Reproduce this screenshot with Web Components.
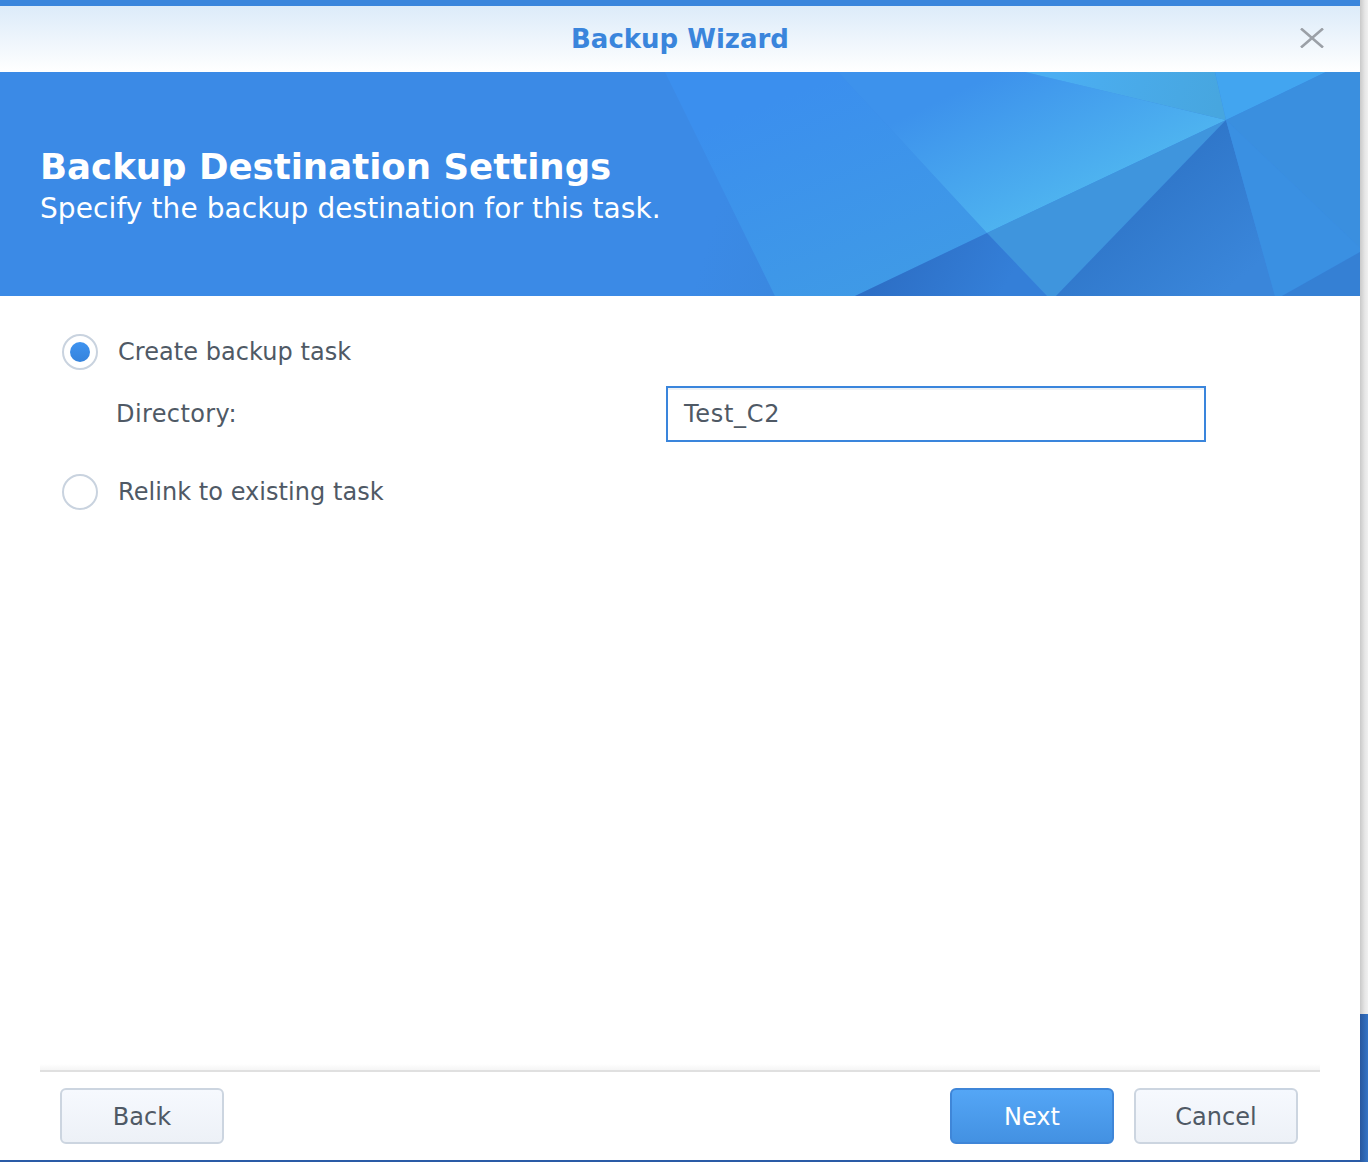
<!DOCTYPE html>
<html>
<head>
<meta charset="utf-8">
<title>Backup Wizard</title>
<style>
    html, body { margin: 0; padding: 0; background: #fff; }
    body { width: 1368px; height: 1162px; overflow: hidden; font-family: "DejaVu Sans", sans-serif; }
</style>
</head>
<body>
<desktop-frame>
    <wizard-window title-text="Backup Wizard">
        <wizard-banner heading="Backup Destination Settings" sub="Specify the backup destination for this task."></wizard-banner>
        <wizard-form></wizard-form>
        <wizard-footer></wizard-footer>
    </wizard-window>
</desktop-frame>

<script>
class DesktopFrame extends HTMLElement {
    connectedCallback() {
        this.attachShadow({mode: 'open'});
        this.shadowRoot.innerHTML = `
            <style>
                :host { display: flex; width: 1368px; height: 1162px; }
                .win { width: 1360px; height: 1160px; flex: none; }
                .edge { flex: 1; display: flex; flex-direction: column; }
                .shade { height: 1014px; background: linear-gradient(90deg, #c9c9c9, #e6e6e6 60%, #f0f0f0); }
                .blue { flex: 1; background: linear-gradient(90deg, #28589f, #3474c6); }
                .column { display: flex; flex-direction: column; height: 1162px; }
                .line { height: 2px; background: #2a5ba6; }
            </style>
            <div class="column">
                <div class="win"><slot></slot></div>
                <div class="line"></div>
            </div>
            <div class="edge"><div class="shade"></div><div class="blue"></div></div>
        `;
    }
}

class WizardWindow extends HTMLElement {
    connectedCallback() {
        this.attachShadow({mode: 'open'});
        this.shadowRoot.innerHTML = `
            <style>
                :host { display: flex; flex-direction: column; height: 1160px; background: #fff; }
                .bar { flex: none; height: 66px; border-top: 6px solid #3a85dc; display: grid; grid-template-columns: 1fr auto 1fr; align-items: center;
                       background: linear-gradient(180deg, #dcebf9, #ffffff); }
                .title { grid-column: 2; color: #3a85dc; font: bold 26px "DejaVu Sans", sans-serif; }
                .close { justify-self: end; margin-right: 36px; width: 24px; height: 20px; margin-top: -2px; }
                svg { display: block; }
            </style>
            <div class="bar">
                <span class="title">${this.getAttribute('title-text')}</span>
                <span class="close">
                    <svg width="24" height="20" viewBox="0 0 24 20"><path d="M1 0.5 L23 19.5 M23 0.5 L1 19.5" stroke="#9ba0a7" stroke-width="2.6" fill="none"/></svg>
                </span>
            </div>
            <slot></slot>
        `;
    }
}

class WizardBanner extends HTMLElement {
    connectedCallback() {
        this.attachShadow({mode: 'open'});
        this.shadowRoot.innerHTML = `
            <style>
                :host { display: block; position: relative; flex: none; height: 224px; background: #3b8ae6; overflow: hidden; }
                svg { position: absolute; left: 0; top: 0; }
                .copy { position: relative; padding: 73px 40px 0; color: #fff; }
                h1 { margin: 0; font: bold 35.55px/44px "DejaVu Sans", sans-serif; }
                p { margin: 2px 0 0; font: 28px/36px "DejaVu Sans", sans-serif; letter-spacing: 0.09px; }
            </style>
            <svg width="1360" height="224" viewBox="0 72 1360 224">
                <defs>
                    <linearGradient id="g1" gradientUnits="userSpaceOnUse" x1="800" y1="90" x2="880" y2="296">
                        <stop offset="0" stop-color="#3b8fee"/><stop offset="1" stop-color="#3f9ae6"/>
                    </linearGradient>
                    <linearGradient id="g2" gradientUnits="userSpaceOnUse" x1="960" y1="90" x2="1030" y2="235">
                        <stop offset="0" stop-color="#3d92ec"/><stop offset="1" stop-color="#50b7f0"/>
                    </linearGradient>
                    <linearGradient id="g3" gradientUnits="userSpaceOnUse" x1="1060" y1="72" x2="1215" y2="120">
                        <stop offset="0" stop-color="#4baef2"/><stop offset="1" stop-color="#47a6df"/>
                    </linearGradient>
                    <linearGradient id="g4" gradientUnits="userSpaceOnUse" x1="900" y1="240" x2="1000" y2="296">
                        <stop offset="0" stop-color="#2d6fc6"/><stop offset="1" stop-color="#347fd8"/>
                    </linearGradient>
                    <linearGradient id="g5" gradientUnits="userSpaceOnUse" x1="1130" y1="190" x2="1220" y2="296">
                        <stop offset="0" stop-color="#2f76c9"/><stop offset="1" stop-color="#3a86da"/>
                    </linearGradient>
                    <linearGradient id="g6" gradientUnits="userSpaceOnUse" x1="0" y1="72" x2="775" y2="296">
                        <stop offset="0.9" stop-color="#3b8ae6"/><stop offset="1" stop-color="#3a88e0"/>
                    </linearGradient>
                </defs>
                <polygon points="0,72 665,72 775,296 0,296" fill="url(#g6)"/>
                <polygon points="665,72 838,72 987,233 855,296 775,296" fill="url(#g1)"/>
                <polygon points="838,72 1025,72 1226,120 987,233" fill="url(#g2)"/>
                <polygon points="1025,72 1215,72 1226,120" fill="url(#g3)"/>
                <polygon points="1215,72 1326,72 1226,120" fill="#42a5f0"/>
                <polygon points="1326,72 1360,72 1360,248 1226,120" fill="#3a8fdf"/>
                <polygon points="1226,120 987,233 1047,296 1056,296" fill="#3f95dd"/>
                <polygon points="987,233 855,296 1047,296" fill="url(#g4)"/>
                <polygon points="1226,120 1056,296 1275,296" fill="url(#g5)"/>
                <polygon points="1226,120 1275,296 1282,296 1360,252 1360,248" fill="#3a90e2"/>
                <polygon points="1360,252 1282,296 1360,296" fill="#3580d4"/>
            </svg>
            <div class="copy">
                <h1>${this.getAttribute('heading')}</h1>
                <p>${this.getAttribute('sub')}</p>
            </div>
        `;
    }
}

class WizardRadio extends HTMLElement {
    connectedCallback() {
        this.attachShadow({mode: 'open'});
        this.shadowRoot.innerHTML = `
            <style>
                :host { display: flex; align-items: center; gap: 20px; height: 36px; color: #4f5965; font: 24px "DejaVu Sans", sans-serif; letter-spacing: 0.05px; }
                .ring { flex: none; box-sizing: border-box; width: 36px; height: 36px; border-radius: 50%; border: 2px solid #c9d3df; background: #fff; display: grid; place-items: center; }
                .dot { width: 20px; height: 20px; border-radius: 50%; background: linear-gradient(180deg, #3f93f0, #3583dc); }
            </style>
            <span class="ring">${this.hasAttribute('checked') ? '<span class="dot"></span>' : ''}</span>
            <span><slot></slot></span>
        `;
    }
}

class WizardForm extends HTMLElement {
    connectedCallback() {
        this.attachShadow({mode: 'open'});
        this.shadowRoot.innerHTML = `
            <style>
                :host { display: block; flex: 1; padding: 38px 0 0 62px; color: #4f5965; font: 24px "DejaVu Sans", sans-serif; }
                .row { display: flex; align-items: center; height: 56px; margin: 16px 0 32px 54px; }
                .row label { width: 550px; letter-spacing: 0.4px; }
                .field { box-sizing: border-box; width: 540px; height: 56px; line-height: 52px; padding-left: 16px; border: 2px solid #3a85dc; box-shadow: inset 0 2px 0 #eef1f4; letter-spacing: 0.7px; }
            </style>
            <wizard-radio checked>Create backup task</wizard-radio>
            <div class="row"><label>Directory:</label><span class="field">Test_C2</span></div>
            <wizard-radio>Relink to existing task</wizard-radio>
        `;
    }
}

class WizardButton extends HTMLElement {
    connectedCallback() {
        this.attachShadow({mode: 'open'});
        this.shadowRoot.innerHTML = `
            <style>
                :host { display: grid; place-items: center; box-sizing: border-box; width: 164px; height: 56px; padding-top: 2px; border-radius: 6px; border: 2px solid #ccd5e0;
                        color: #4f5965; background: linear-gradient(180deg, #f6f9fe, #edf1f7); font: 24px "DejaVu Sans", sans-serif; }
                :host([primary]) { border-color: #3f86d8; color: #fff; background: linear-gradient(180deg, #54a6f6, #4391e2); }
            </style>
            <slot></slot>
        `;
    }
}

class WizardFooter extends HTMLElement {
    connectedCallback() {
        this.attachShadow({mode: 'open'});
        this.shadowRoot.innerHTML = `
            <style>
                :host { display: block; flex: none; height: 90px; padding: 0 40px; }
                .inner { height: 88px; border-top: 2px solid #e0e0e0; display: flex; gap: 20px; padding: 16px 22px 0 20px; box-sizing: border-box; position: relative; }
                .inner::before { content: ""; position: absolute; left: 0; right: 0; top: -8px; height: 6px; background: linear-gradient(180deg, #fff, #f5f5f5); }
                .spacer { flex: 1; }
            </style>
            <div class="inner">
                <wizard-button>Back</wizard-button>
                <span class="spacer"></span>
                <wizard-button primary>Next</wizard-button>
                <wizard-button>Cancel</wizard-button>
            </div>
        `;
    }
}

customElements.define('desktop-frame', DesktopFrame);
customElements.define('wizard-window', WizardWindow);
customElements.define('wizard-banner', WizardBanner);
customElements.define('wizard-radio', WizardRadio);
customElements.define('wizard-form', WizardForm);
customElements.define('wizard-button', WizardButton);
customElements.define('wizard-footer', WizardFooter);
</script>
</body>
</html>
